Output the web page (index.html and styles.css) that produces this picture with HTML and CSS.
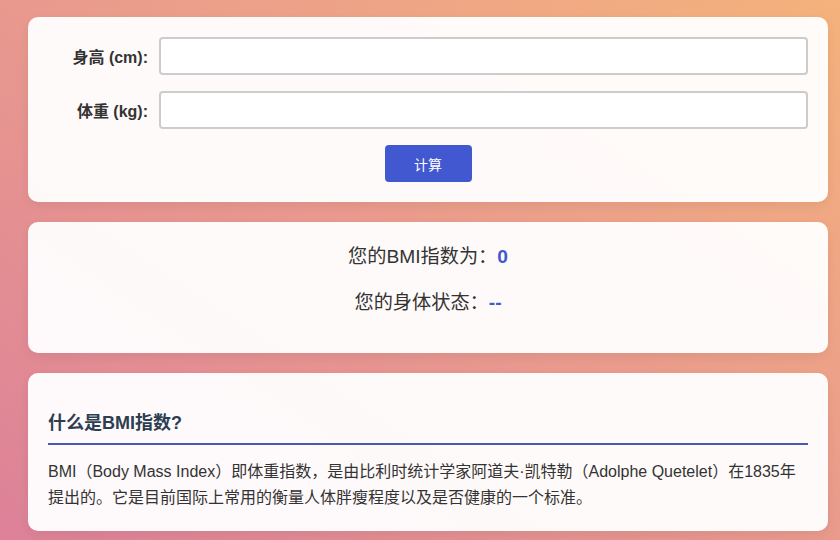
FILE: index.html
```html
<!DOCTYPE html>
<html lang="zh-CN">
<head>
    <meta charset="UTF-8">
    <meta name="viewport" content="width=device-width, initial-scale=1.0">
    <title>BMI计算器</title>
    <link rel="stylesheet" href="styles.css">
</head>
<body>
    <div class="container">
        <div class="card form-card">
            <div class="form-row">
                <label for="height">身高 (cm):</label>
                <input type="number" id="height">
            </div>
            <div class="form-row">
                <label for="weight">体重 (kg):</label>
                <input type="number" id="weight">
            </div>
            <div class="actions">
                <button onclick="calcBMI()">计算</button>
            </div>
        </div>

        <div class="card result-card">
            <p>您的BMI指数为：<span class="value" id="bmiValue">0</span></p>
            <p>您的身体状态：<span class="value" id="bmiStatus">--</span></p>
        </div>

        <div class="card info-card">
            <h2>什么是BMI指数?</h2>
            <p>BMI（Body Mass Index）即体重指数，是由比利时统计学家阿道夫·凯特勒（Adolphe Quetelet）在1835年提出的。它是目前国际上常用的衡量人体胖瘦程度以及是否健康的一个标准。</p>
        </div>
    </div>

    <script>
        function calcBMI() {
            const h = parseFloat(document.getElementById('height').value) / 100;
            const w = parseFloat(document.getElementById('weight').value);
            if (!h || !w) {
                alert('请输入身高和体重！');
                return;
            }
            const bmi = w / (h * h);
            let status = '正常';
            if (bmi < 18.5) status = '偏瘦';
            else if (bmi >= 28) status = '肥胖';
            else if (bmi >= 24) status = '超重';
            document.getElementById('bmiValue').innerText = bmi.toFixed(1);
            document.getElementById('bmiStatus').innerText = status;
        }
    </script>
</body>
</html>
```

FILE: styles.css
```css
html {
    min-height: 100%;
    background: linear-gradient(to top right, #dc8099 0%, #e9998e 50%, #f4b27c 100%);
}

body {
    margin: 0;
    padding: 17px 12px 20px 28px;
    font-family: "Liberation Sans", Arial, "Noto Sans CJK SC", sans-serif;
    color: #333;
}

.container {
    max-width: 800px;
}

.card {
    background-color: rgba(255, 255, 255, 0.95);
    border-radius: 10px;
    padding: 20px;
    margin-bottom: 20px;
    box-shadow: 0 4px 12px rgba(0, 0, 0, 0.06);
}

.form-row {
    display: flex;
    align-items: center;
    margin-bottom: 16px;
}

.form-row label {
    width: 100px;
    margin-right: 11px;
    text-align: right;
    font-size: 16px;
    font-weight: bold;
    color: #333;
}

.form-row input {
    flex: 1;
    height: 38px;
    box-sizing: border-box;
    border: 2px solid #ccc;
    border-radius: 4px;
    padding: 0 10px;
    font-size: 16px;
    background-color: #fff;
}

.actions {
    text-align: center;
}

.actions button {
    width: 87px;
    height: 37px;
    background-color: #4158d0;
    color: white;
    border: none;
    border-radius: 4px;
    font-size: 14px;
    font-family: inherit;
    cursor: pointer;
}

.actions button:hover {
    background-color: #3347b5;
}

.result-card {
    text-align: center;
    padding-bottom: 36px;
}

.result-card p {
    margin: 0;
    font-size: 19.2px;
    line-height: 29px;
}

.result-card p + p {
    margin-top: 17px;
}

.result-card .value {
    font-weight: bold;
    color: #4158d0;
}

.info-card h2 {
    margin: 20px 0 0;
    padding-bottom: 10px;
    font-size: 18px;
    line-height: 20px;
    color: #2c3e50;
    border-bottom: 2px solid #4a5bab;
}

.info-card p {
    margin: 14px 0 0;
    font-size: 16px;
    line-height: 26px;
    color: #333;
}
```
